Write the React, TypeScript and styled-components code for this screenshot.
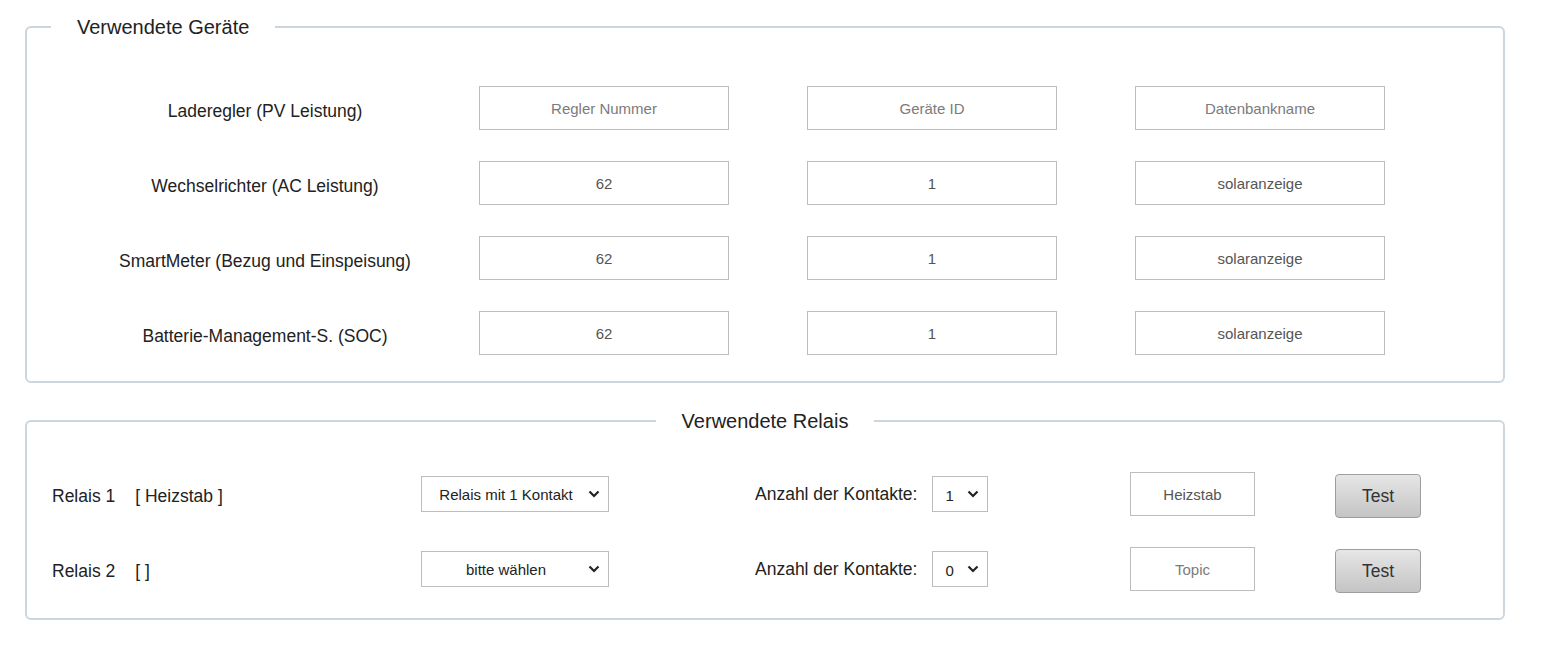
import styled, { createGlobalStyle } from "styled-components";
import React from "react";

interface Device {
  label: string;
  regler: string;
  id: string;
  db: string;
}

interface Relay {
  name: string;
  tag: string;
  type: string;
  contacts: string;
  topic: string;
}

const devices: Device[] = [
  { label: "Laderegler (PV Leistung)", regler: "", id: "", db: "" },
  { label: "Wechselrichter (AC Leistung)", regler: "62", id: "1", db: "solaranzeige" },
  { label: "SmartMeter (Bezug und Einspeisung)", regler: "62", id: "1", db: "solaranzeige" },
  { label: "Batterie-Management-S. (SOC)", regler: "62", id: "1", db: "solaranzeige" },
];

const relays: Relay[] = [
  { name: "Relais 1", tag: "[ Heizstab ]", type: "1", contacts: "1", topic: "Heizstab" },
  { name: "Relais 2", tag: "[ ]", type: "", contacts: "0", topic: "" },
];

export default function App() {
  return (
    <>
      <GlobalStyle />
      <StyledPage>
        <StyledFieldset>
          <StyledLegend>Verwendete Geräte</StyledLegend>
          <StyledDeviceGrid>
            {devices.map((dev, idx: number) => (
              <React.Fragment key={idx}>
                <StyledDeviceLabel>{dev.label}</StyledDeviceLabel>
                <StyledCell>
                  <StyledInput placeholder="Regler Nummer" defaultValue={dev.regler} />
                </StyledCell>
                <StyledCell>
                  <StyledInput placeholder="Geräte ID" defaultValue={dev.id} />
                </StyledCell>
                <StyledCell>
                  <StyledInput placeholder="Datenbankname" defaultValue={dev.db} />
                </StyledCell>
              </React.Fragment>
            ))}
          </StyledDeviceGrid>
        </StyledFieldset>

        <StyledFieldset $compact>
          <StyledLegend $center>Verwendete Relais</StyledLegend>
          <StyledRelayGrid>
            {relays.map((rel, idx: number) => (
              <React.Fragment key={idx}>
                <StyledRelayName>
                  <span>{rel.name}</span>
                  <StyledTag>{rel.tag}</StyledTag>
                </StyledRelayName>
                <StyledCell>
                  <StyledSelect $width={188} $center defaultValue={rel.type}>
                    <option value="">bitte wählen</option>
                    <option value="1">Relais mit 1 Kontakt</option>
                    <option value="2">Relais mit 2 Kontakten</option>
                  </StyledSelect>
                </StyledCell>
                <StyledContacts>
                  <span>Anzahl der Kontakte:</span>
                  <StyledSelect $width={56} defaultValue={rel.contacts}>
                    <option value="0">0</option>
                    <option value="1">1</option>
                    <option value="2">2</option>
                  </StyledSelect>
                </StyledContacts>
                <StyledCell>
                  <StyledInput $width={125} placeholder="Topic" defaultValue={rel.topic} />
                </StyledCell>
                <StyledCell>
                  <StyledButton>Test</StyledButton>
                </StyledCell>
              </React.Fragment>
            ))}
          </StyledRelayGrid>
        </StyledFieldset>
      </StyledPage>
    </>
  );
}

// style
const chevron =
  "url(\"data:image/svg+xml;utf8,<svg xmlns='http://www.w3.org/2000/svg' width='12' height='8' viewBox='0 0 12 8'><path d='M1.5 1.5 L6 6 L10.5 1.5' fill='none' stroke='%23222' stroke-width='2.2'/></svg>\")";

const GlobalStyle = createGlobalStyle`
  * { box-sizing: border-box; }
  body {
    margin: 0;
    background: #fff;
    font-family: "Liberation Sans", Arial, sans-serif;
    color: #222;
  }
`;

const StyledPage = styled.main`
  display: flex;
  flex-direction: column;
  gap: 28px;
  width: 1480px;
  margin-left: 25px;
  padding-top: 17px;
`;

const StyledFieldset = styled.fieldset<{ $compact?: boolean }>`
  margin: 0;
  min-width: 0;
  border: 2px solid #ccd6dc;
  border-radius: 6px;
  padding: ${(p) => (p.$compact ? "41px 24px 27px" : "49px 24px 26px")};
`;

const StyledLegend = styled.legend<{ $center?: boolean }>`
  padding: 0 26px;
  margin: ${(p) => (p.$center ? "0 auto" : "0")};
  font-size: 20px;
  line-height: 20px;
  color: #222;
`;

const StyledDeviceGrid = styled.div`
  display: grid;
  grid-template-columns: 428px 328px 328px 328px;
  grid-auto-rows: 44px;
  row-gap: 31px;
  align-items: center;
`;

const StyledDeviceLabel = styled.div`
  text-align: center;
  font-size: 17.5px;
  padding-top: 6px;
`;

const StyledCell = styled.div`
  display: flex;
  align-items: center;
`;

const StyledInput = styled.input<{ $width?: number }>`
  width: ${(p) => p.$width ?? 250}px;
  height: 44px;
  border: 1px solid #bdbdbd;
  background: #fff;
  text-align: center;
  font-family: "Liberation Sans", Arial, sans-serif;
  font-size: 15px;
  color: #555;
  outline: none;

  &::placeholder {
    color: #7b7b7b;
  }
`;

const StyledRelayGrid = styled.div`
  display: grid;
  grid-template-columns: 370px 334px 375px 205px 100px;
  grid-auto-rows: 44px;
  row-gap: 31px;
  align-items: center;
`;

const StyledRelayName = styled.div`
  display: flex;
  align-items: center;
  gap: 20px;
  font-size: 17.5px;
  padding-left: 1px;
  padding-top: 4px;
`;

const StyledTag = styled.span`
  color: #222;
`;

const StyledContacts = styled.div`
  display: flex;
  align-items: center;
  gap: 15px;
  font-size: 17.5px;
`;

const StyledSelect = styled.select<{ $width: number; $center?: boolean }>`
  appearance: none;
  width: ${(p) => p.$width}px;
  height: 36px;
  border: 1px solid #bdbdbd;
  border-radius: 0;
  background: #fff ${chevron} no-repeat right 8px center;
  padding: ${(p) => (p.$center ? "0 26px 0 8px" : "3px 20px 0 12px")};
  text-align: ${(p) => (p.$center ? "center" : "left")};
  text-align-last: ${(p) => (p.$center ? "center" : "left")};
  font-family: "Liberation Sans", Arial, sans-serif;
  font-size: 15px;
  color: #222;
  outline: none;
`;

const StyledButton = styled.button`
  width: 86px;
  height: 44px;
  margin-top: 4px;
  border: 1px solid #9e9e9e;
  border-radius: 4px;
  background: linear-gradient(#e6e6e6, #c4c4c4);
  font-family: "Liberation Sans", Arial, sans-serif;
  font-size: 17.5px;
  color: #333;
  cursor: pointer;
`;
